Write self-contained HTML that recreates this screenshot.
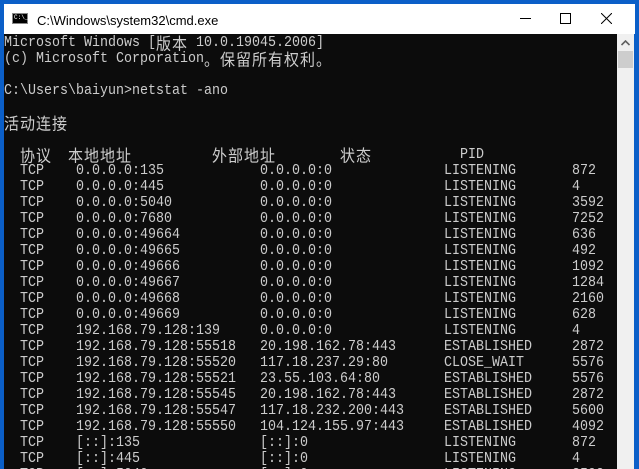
<!DOCTYPE html><html><head><meta charset="utf-8"><style>
body{margin:0;width:639px;height:469px;overflow:hidden;background:#0b5fc8;position:relative}
.title{position:absolute;left:4px;top:4px;width:631px;height:30px;background:#fff}
.ttxt{position:absolute;left:33px;top:9px;font:13px "Liberation Sans",sans-serif;color:#000}
.term{position:absolute;left:4px;top:34px;width:613px;height:435px;background:#0c0c0c;overflow:hidden}
.sb{position:absolute;left:617px;top:34px;width:17px;height:435px;background:#f0f0f0}
.l{position:absolute;height:16px;line-height:16px;font:13.33px "Liberation Mono","Noto Sans CJK SC",monospace;color:#cccccc;white-space:pre;transform:scaleY(1.1)}
.c{font-family:"Noto Sans CJK SC",sans-serif;font-size:15px;display:inline-block;line-height:16px;height:16px;vertical-align:top;letter-spacing:1px}
</style></head><body>
<div class="title">
<div style="position:absolute;left:8px;top:9px;width:16px;height:11px;background:#000;border:1px solid #888;box-sizing:border-box"><span style="position:absolute;left:1px;top:0;font:6px 'Liberation Mono';color:#fff;line-height:8px">C:\_</span></div>
<div class="ttxt">C:\Windows\system32\cmd.exe</div>
<div style="position:absolute;left:516px;top:14px;width:11px;height:1px;background:#000"></div>
<div style="position:absolute;left:556px;top:9px;width:9px;height:9px;border:1px solid #000"></div>
<svg style="position:absolute;left:597px;top:9px" width="11" height="11"><path d="M0 0L11 11M11 0L0 11" stroke="#000" stroke-width="1"/></svg>
</div>
<div class="term" id="t"></div>
<div class="sb">
<svg style="position:absolute;left:4px;top:6px" width="9" height="6"><path d="M0.5 5L4.5 1L8.5 5" stroke="#606060" stroke-width="1.6" fill="none"/></svg>
<div style="position:absolute;left:1px;top:17px;width:15px;height:17px;background:#cdcdcd"></div>
</div>
<script>
var t=document.getElementById('t');
function L(n,col,s,cjk){var d=document.createElement('div');d.className='l';d.style.top=(2+16*n)+'px';d.style.left=(col*8)+'px';d.innerHTML=cjk?'<span class="c">'+s+'</span>':s;t.appendChild(d);}
L(0,0,'Microsoft Windows [');L(0,19,'版本',1);L(0,23,' 10.0.19045.2006]');
L(1,0,'(c) Microsoft Corporation');L(1,25,'。保留所有权利。',1);
L(3,0,'C:\\Users\\baiyun&gt;netstat -ano');
L(5,0,'活动连接',1);
L(7,2,'协议',1);L(7,8,'本地地址',1);L(7,26,'外部地址',1);L(7,42,'状态',1);L(7,57,'PID');
var r=[['0.0.0.0:135','0.0.0.0:0','LISTENING','872'],['0.0.0.0:445','0.0.0.0:0','LISTENING','4'],['0.0.0.0:5040','0.0.0.0:0','LISTENING','3592'],['0.0.0.0:7680','0.0.0.0:0','LISTENING','7252'],['0.0.0.0:49664','0.0.0.0:0','LISTENING','636'],['0.0.0.0:49665','0.0.0.0:0','LISTENING','492'],['0.0.0.0:49666','0.0.0.0:0','LISTENING','1092'],['0.0.0.0:49667','0.0.0.0:0','LISTENING','1284'],['0.0.0.0:49668','0.0.0.0:0','LISTENING','2160'],['0.0.0.0:49669','0.0.0.0:0','LISTENING','628'],['192.168.79.128:139','0.0.0.0:0','LISTENING','4'],['192.168.79.128:55518','20.198.162.78:443','ESTABLISHED','2872'],['192.168.79.128:55520','117.18.237.29:80','CLOSE_WAIT','5576'],['192.168.79.128:55521','23.55.103.64:80','ESTABLISHED','5576'],['192.168.79.128:55545','20.198.162.78:443','ESTABLISHED','2872'],['192.168.79.128:55547','117.18.232.200:443','ESTABLISHED','5600'],['192.168.79.128:55550','104.124.155.97:443','ESTABLISHED','4092'],['[::]:135','[::]:0','LISTENING','872'],['[::]:445','[::]:0','LISTENING','4'],['[::]:5040','[::]:0','LISTENING','3592']];
r.forEach(function(x,i){var n=8+i;L(n,2,'TCP');L(n,9,x[0]);L(n,32,x[1]);L(n,55,x[2]);L(n,71,x[3]);});
</script>
</body></html>
